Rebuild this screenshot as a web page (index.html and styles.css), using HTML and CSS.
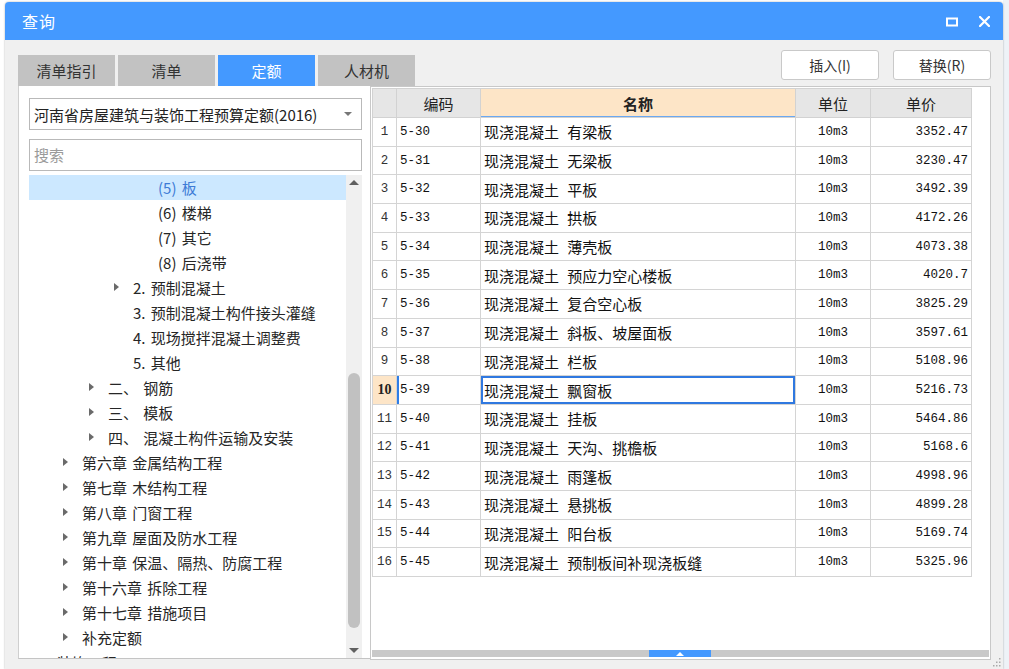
FILE: index.html
```html
<!DOCTYPE html>
<html lang="zh-CN">
<head>
<meta charset="utf-8">
<title>查询</title>
<link rel="stylesheet" href="styles.css">
</head>
<body>
<div class="page">
  <div class="dialog">
    <div class="titlebar">
      <span class="title">查询</span>
      <div class="win-btns">
        <svg class="ico-max" width="12" height="10" viewBox="0 0 12 10"><rect x="1" y="1.5" width="10" height="7" fill="none" stroke="#fff" stroke-width="2"/></svg>
        <svg class="ico-close" width="11" height="11" viewBox="0 0 11 11"><path d="M1 1L10 10M10 1L1 10" stroke="#fff" stroke-width="2.2" stroke-linecap="square"/></svg>
      </div>
    </div>

    <div class="toolbar">
      <div class="tabs">
        <div class="tab">清单指引</div>
        <div class="tab">清单</div>
        <div class="tab active">定额</div>
        <div class="tab">人材机</div>
      </div>
      <div class="actions">
        <button class="btn">插入(I)</button>
        <button class="btn">替换(R)</button>
      </div>
    </div>

    <div class="content">
      <div class="left">
        <div class="select">
          <span>河南省房屋建筑与装饰工程预算定额(2016)</span>
          <span class="caret"></span>
        </div>
        <div class="search">搜索</div>
        <div class="tree">
          <div class="tree-list">
            <div class="node l4 selected">(5) 板</div>
            <div class="node l4">(6) 楼梯</div>
            <div class="node l4">(7) 其它</div>
            <div class="node l4">(8) 后浇带</div>
            <div class="node l3 has-kids">2. 预制混凝土</div>
            <div class="node l3">3. 预制混凝土构件接头灌缝</div>
            <div class="node l3">4. 现场搅拌混凝土调整费</div>
            <div class="node l3">5. 其他</div>
            <div class="node l2 has-kids">二、 钢筋</div>
            <div class="node l2 has-kids">三、 模板</div>
            <div class="node l2 has-kids">四、 混凝土构件运输及安装</div>
            <div class="node l1 has-kids">第六章 金属结构工程</div>
            <div class="node l1 has-kids">第七章 木结构工程</div>
            <div class="node l1 has-kids">第八章 门窗工程</div>
            <div class="node l1 has-kids">第九章 屋面及防水工程</div>
            <div class="node l1 has-kids">第十章 保温、隔热、防腐工程</div>
            <div class="node l1 has-kids">第十六章 拆除工程</div>
            <div class="node l1 has-kids">第十七章 措施项目</div>
            <div class="node l1 has-kids">补充定额</div>
            <div class="node l0">装饰工程</div>
          </div>
          <div class="vscroll">
            <div class="sb-btn"><span class="tri-up"></span></div>
            <div class="sb-track"><div class="sb-thumb"></div></div>
            <div class="sb-btn"><span class="tri-down"></span></div>
          </div>
        </div>
      </div>

      <div class="right">
        <div class="grid-wrap">
          <table class="grid">
            <colgroup>
              <col class="c-no"><col class="c-code"><col class="c-name"><col class="c-unit"><col class="c-price">
            </colgroup>
            <thead>
              <tr>
                <th></th><th>编码</th><th class="h-name">名称</th><th>单位</th><th>单价</th>
              </tr>
            </thead>
            <tbody>
              <tr><td class="no">1</td><td class="code">5-30</td><td class="name">现浇混凝土 有梁板</td><td class="unit">10m3</td><td class="price">3352.47</td></tr>
              <tr><td class="no">2</td><td class="code">5-31</td><td class="name">现浇混凝土 无梁板</td><td class="unit">10m3</td><td class="price">3230.47</td></tr>
              <tr><td class="no">3</td><td class="code">5-32</td><td class="name">现浇混凝土 平板</td><td class="unit">10m3</td><td class="price">3492.39</td></tr>
              <tr><td class="no">4</td><td class="code">5-33</td><td class="name">现浇混凝土 拱板</td><td class="unit">10m3</td><td class="price">4172.26</td></tr>
              <tr><td class="no">5</td><td class="code">5-34</td><td class="name">现浇混凝土 薄壳板</td><td class="unit">10m3</td><td class="price">4073.38</td></tr>
              <tr><td class="no">6</td><td class="code">5-35</td><td class="name">现浇混凝土 预应力空心楼板</td><td class="unit">10m3</td><td class="price">4020.7</td></tr>
              <tr><td class="no">7</td><td class="code">5-36</td><td class="name">现浇混凝土 复合空心板</td><td class="unit">10m3</td><td class="price">3825.29</td></tr>
              <tr><td class="no">8</td><td class="code">5-37</td><td class="name">现浇混凝土 斜板、坡屋面板</td><td class="unit">10m3</td><td class="price">3597.61</td></tr>
              <tr><td class="no">9</td><td class="code">5-38</td><td class="name">现浇混凝土 栏板</td><td class="unit">10m3</td><td class="price">5108.96</td></tr>
              <tr class="current"><td class="no">10</td><td class="code">5-39</td><td class="name">现浇混凝土 飘窗板</td><td class="unit">10m3</td><td class="price">5216.73</td></tr>
              <tr><td class="no">11</td><td class="code">5-40</td><td class="name">现浇混凝土 挂板</td><td class="unit">10m3</td><td class="price">5464.86</td></tr>
              <tr><td class="no">12</td><td class="code">5-41</td><td class="name">现浇混凝土 天沟、挑檐板</td><td class="unit">10m3</td><td class="price">5168.6</td></tr>
              <tr><td class="no">13</td><td class="code">5-42</td><td class="name">现浇混凝土 雨篷板</td><td class="unit">10m3</td><td class="price">4998.96</td></tr>
              <tr><td class="no">14</td><td class="code">5-43</td><td class="name">现浇混凝土 悬挑板</td><td class="unit">10m3</td><td class="price">4899.28</td></tr>
              <tr><td class="no">15</td><td class="code">5-44</td><td class="name">现浇混凝土 阳台板</td><td class="unit">10m3</td><td class="price">5169.74</td></tr>
              <tr><td class="no">16</td><td class="code">5-45</td><td class="name">现浇混凝土 预制板间补现浇板缝</td><td class="unit">10m3</td><td class="price">5325.96</td></tr>
            </tbody>
          </table>
        </div>
        <div class="hsplit"><div class="hthumb"><span class="tri-up-white"></span></div></div>
      </div>
    </div>

    <svg class="grip" width="8" height="12" viewBox="0 0 8 12">
      <rect x="6" y="2" width="1.5" height="1.5" fill="#aaa"/>
      <rect x="6" y="5.5" width="1.5" height="1.5" fill="#aaa"/>
      <rect x="3" y="5.5" width="1.5" height="1.5" fill="#aaa"/>
      <rect x="6" y="9" width="1.5" height="1.5" fill="#aaa"/>
      <rect x="3" y="9" width="1.5" height="1.5" fill="#aaa"/>
      <rect x="0" y="9" width="1.5" height="1.5" fill="#aaa"/>
    </svg>
  </div>
</div>
</body>
</html>
```

FILE: styles.css
```css
* { box-sizing: border-box; }

html, body {
  margin: 0;
  padding: 0;
  background: #ffffff;
  font-family: "Noto Sans CJK SC", "Noto Sans", sans-serif;
  color: #222;
}

.page {
  width: 1009px;
  height: 669px;
  padding: 2px 6px 0 5px;
  overflow: hidden;
  background: linear-gradient(to right, #fff 0, #fff 1003px, #eef2f7 1003px);
}

.dialog {
  position: relative;
  width: 998px;
  height: 667px;
  background: #f0f0f0;
  border-radius: 4px 4px 0 0;
  overflow: hidden;
  box-shadow: 0 0 2px rgba(0, 0, 0, 0.35);
  display: flex;
  flex-direction: column;
}

/* title bar */
.titlebar {
  height: 38px;
  flex: none;
  background: #4499ff;
  display: flex;
  align-items: center;
  padding: 0 13px 0 17px;
}
.title {
  color: #fff;
  font-size: 16px;
  line-height: 20px;
  letter-spacing: 1px;
}
.win-btns {
  margin-left: auto;
  display: flex;
  align-items: center;
  gap: 21px;
}
.ico-max { display: block; margin-top: 1px; }
.ico-close { display: block; }

/* toolbar */
.toolbar {
  height: 46px;
  flex: none;
  display: flex;
  padding: 0 12px 0 13px;
}
.tabs {
  display: flex;
  align-items: flex-end;
  gap: 3px;
}
.tab {
  width: 97px;
  height: 31px;
  background: #c2c2c2;
  color: #333;
  font-size: 15px;
  line-height: 31px;
  text-align: center;
}
.tab.active {
  background: #4499ff;
  color: #fff;
}
.actions {
  margin-left: auto;
  display: flex;
  gap: 14px;
  padding-top: 10px;
}
.btn {
  width: 98px;
  height: 30px;
  background: #fff;
  border: 1px solid #c9c9c9;
  border-radius: 3px;
  font-family: "Noto Sans CJK SC", "Noto Sans", sans-serif;
  font-size: 14px;
  color: #333;
  padding: 0;
}

/* content */
.content {
  flex: 1;
  display: flex;
  padding: 0 11px 0 13px;
  align-items: flex-start;
}

.left {
  width: 352px;
  height: 573px;
  background: #fff;
  border-left: 1px solid #cfcfcf;
  border-bottom: 1px solid #c4c4c4;
  padding: 12px 8px 0 10px;
  display: flex;
  flex-direction: column;
}
.select {
  height: 32px;
  flex: none;
  border: 1px solid #b9b9b9;
  display: flex;
  align-items: center;
  padding: 0 9px 0 4px;
  font-size: 15px;
  color: #222;
}
.caret {
  margin-left: auto;
  width: 0;
  height: 0;
  border-left: 4px solid transparent;
  border-right: 4px solid transparent;
  border-top: 4px solid #777;
}
.search {
  height: 32px;
  flex: none;
  margin-top: 9px;
  border: 1px solid #b9b9b9;
  padding-left: 4px;
  font-size: 15px;
  line-height: 30px;
  color: #9a9a9a;
}
.tree {
  flex: 1;
  margin-top: 4px;
  display: flex;
  overflow: hidden;
  min-height: 0;
}
.tree-list {
  flex: 1;
  overflow: hidden;
}
.node {
  position: relative;
  height: 25px;
  line-height: 25px;
  font-size: 15px;
  color: #262626;
  white-space: nowrap;
  word-spacing: 2px;
}
.node.l0 { padding-left: 28px; }
.node.l1 { padding-left: 53px; }
.node.l2 { padding-left: 79px; }
.node.l3 { padding-left: 104px; }
.node.l4 { padding-left: 129px; }
.node.selected {
  background: #cce8ff;
  color: #3d7bd6;
}
.node.has-kids::before {
  content: "";
  position: absolute;
  top: 8px;
  width: 0;
  height: 0;
  border-top: 4px solid transparent;
  border-bottom: 4px solid transparent;
  border-left: 5px solid #6a6a6a;
}
.node.l1.has-kids::before { left: 34px; }
.node.l2.has-kids::before { left: 60px; }
.node.l3.has-kids::before { left: 85px; }

.vscroll {
  width: 16px;
  flex: none;
  background: #f0f0f0;
  display: flex;
  flex-direction: column;
}
.sb-btn {
  height: 15px;
  flex: none;
  display: flex;
  align-items: center;
  justify-content: center;
}
.tri-up {
  width: 0; height: 0;
  border-left: 5px solid transparent;
  border-right: 5px solid transparent;
  border-bottom: 5px solid #606060;
}
.tri-down {
  width: 0; height: 0;
  border-left: 5px solid transparent;
  border-right: 5px solid transparent;
  border-top: 5px solid #606060;
}
.sb-track {
  flex: 1;
}
.sb-thumb {
  margin: 183px 2px 0 2px;
  height: 255px;
  border-radius: 6px;
  background: #c1c1c1;
}

/* right grid */
.right {
  width: 621px;
  height: 574px;
  background: #fff;
  border: 1px solid #c8c8c8;
  padding: 1px 1px 1px 1px;
  display: flex;
  flex-direction: column;
}
.grid-wrap {
  flex: 1;
  overflow: hidden;
}
.grid {
  border-collapse: collapse;
  table-layout: fixed;
  width: 599px;
}
.c-no { width: 24px; }
.c-code { width: 84px; }
.c-name { width: 315px; }
.c-unit { width: 75px; }
.c-price { width: 101px; }

.grid th {
  height: 29px;
  background: #e6e6e6;
  border: 1px solid #d2d2d2;
  font-weight: normal;
  font-size: 15px;
  color: #222;
  padding: 0;
  text-align: center;
}
.grid th.h-name {
  background: #fde5c7;
  font-weight: bold;
  box-shadow: inset 0 -1px 0 #6aa8f2;
}
.grid tbody tr { height: 28.7px; }
.grid td {
  border: 1px solid #d4d4d4;
  padding: 0 3px;
  white-space: nowrap;
  overflow: hidden;
  color: #111;
}
.grid td.no {
  font-family: "Liberation Mono", monospace;
  font-size: 12.5px;
  text-align: center;
  padding: 0;
  color: #333;
}
.grid td.code {
  font-family: "Liberation Mono", monospace;
  font-size: 12.5px;
  padding-left: 3px;
}
.grid td.name {
  font-size: 15px;
  padding-left: 3px;
  word-spacing: 5px;
}
.grid td.unit {
  font-family: "Liberation Mono", monospace;
  font-size: 12.5px;
  text-align: center;
}
.grid td.price {
  font-family: "Liberation Mono", monospace;
  font-size: 12.5px;
  text-align: right;
  padding-right: 3px;
}
.grid tr.current td.no {
  background: #fde5c7;
  font-weight: bold;
  font-family: "Liberation Serif", serif;
  font-size: 14px;
  color: #222;
}
.grid tr.current td.code {
  box-shadow: inset 2px 0 0 #2f7de6;
}
.grid tr.current td.name {
  box-shadow: inset 0 0 0 2px #2f78e0;
}

.hsplit {
  height: 7px;
  flex: none;
  background: #c9c9c9;
  margin-bottom: 1px;
  display: flex;
}
.hthumb {
  margin-left: 277px;
  width: 62px;
  height: 7px;
  background: #4499ff;
  display: flex;
  align-items: center;
  justify-content: center;
}
.tri-up-white {
  width: 0; height: 0;
  border-left: 4px solid transparent;
  border-right: 4px solid transparent;
  border-bottom: 4px solid #fff;
}

.grip {
  position: absolute;
  right: 2px;
  bottom: 1px;
}
```
